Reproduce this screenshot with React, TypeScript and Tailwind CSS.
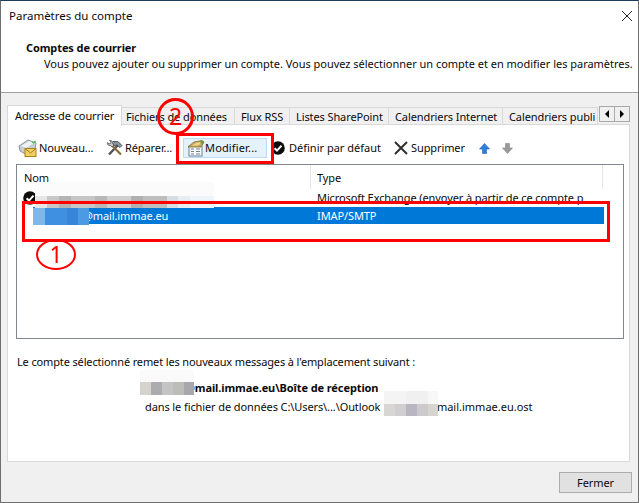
import React from "react";

const Badge = () => (
  <svg width="16" height="16" viewBox="0 0 16 16" className="shrink-0">
    <circle cx="8" cy="8" r="6.8" fill="#0c0c0c" />
    <path d="M4.600 8.200 7 10.600 11.500 5.600" fill="none" stroke="#fff" strokeWidth="2" />
  </svg>
);

const NewIcon = () => (
  <svg width="20" height="20" viewBox="0 0 20 20" className="shrink-0">
    <path d="M1 8 10 2l8 3-1 6-8 6-7-4z" fill="#c9ced3" stroke="#8d969e" strokeWidth="1" />
    <path d="M3 8 11 3l5 2-8 5z" fill="#eef1f3" />
    <path d="M14 3.500l1.500 1.500 2-2" fill="none" stroke="#4cc04c" strokeWidth="1.200" />
    <rect x="7" y="10.500" width="11" height="8" fill="#f2d060" stroke="#a8821e" />
    <path d="M7 10.500l5.500 4.500 5.500-4.500" fill="none" stroke="#a8821e" />
  </svg>
);

const RepairIcon = () => (
  <svg width="18" height="18" viewBox="0 0 18 18" className="shrink-0">
    <path d="M3 15.500 12 6" stroke="#4b5157" strokeWidth="2.400" />
    <path d="M7 2.500h5l4 4-2 2-3-2.500-3 .5-1-2 1-1z" fill="#8a929a" stroke="#3d4349" strokeWidth=".8" />
    <path d="M15 15.500 6.500 7" stroke="#8c6a3a" strokeWidth="2.200" />
    <path d="M1.500 3.500 3 5l1.500-.5.500-1.500L3.500 1.500C5.500 1 7 2.500 6.500 4.500L8 6 6 8 4.500 6.500C2.500 7 1 5.500 1.500 3.500z" fill="#c2c8ce" stroke="#4b5157" strokeWidth=".8" />
  </svg>
);

const EditIcon = () => (
  <svg width="18" height="18" viewBox="0 0 18 18" className="shrink-0">
    <rect x="2" y="7" width="13" height="10" fill="#f7f9fb" stroke="#6f8296" />
    <path d="M4 10h3M4 12.500h3M4 15h3M9 10h4M9 12.500h4M9 15h4" stroke="#6f8296" />
    <path d="M1 8 7 3l8-1.500 2 1.500-3 5H4z" fill="#c9ab5e" stroke="#7d6a34" strokeWidth=".8" />
    <path d="M5 7l4-3 5-1-2 3z" fill="#ecd88f" />
    <path d="M13 1.500l4 1.500-2 3z" fill="#6e9a3c" />
  </svg>
);

const XIcon = () => (
  <svg width="16" height="16" viewBox="0 0 16 16" className="shrink-0">
    <path d="M2 2 14 14M14 2 2 14" stroke="#303030" strokeWidth="2" />
  </svg>
);

const Arrow = ({ up, color, edge }: { up: boolean; color: string; edge: string }) => (
  <svg width="11" height="11" viewBox="0 0 11 11" className="shrink-0">
    <path
      d={up ? "M5.500 .5 10.500 6H7.500v4.500h-4V6H.5z" : "M5.500 10.500 10.500 5H7.500V.5h-4V5H.5z"}
      fill={color}
      stroke={edge}
      strokeWidth=".6"
    />
  </svg>
);

const Tab = ({ label, w, pl = "pl-[4px]" }: { label: string; w: string; pl?: string }) => (
  <div className={`${w} ${pl} h-[18px] leading-[17px] bg-[#f0f0f0] border border-[#d9d9d9] border-l-0 overflow-hidden whitespace-nowrap`}>
    {label}
  </div>
);

const Tool = ({ icon, label, cls }: { icon: React.ReactNode; label: string; cls: string }) => (
  <div className={`flex items-center ${cls}`}>
    {icon}
    <span>{label}</span>
  </div>
);

const Pix = ({ box, cells }: { box: string; cells: [string, string][] }) => (
  <div className={`absolute flex ${box}`}>
    {cells.map(([w, c], i) => (
      <div key={i} className={`${w} ${c} h-full`} />
    ))}
  </div>
);

export default function App() {
  return (
    <div
      className="relative w-[639px] h-[503px] overflow-hidden bg-[#f0f0f0] text-[11px] leading-[16px] text-[#0a0a0a] border-x border-b border-[#6f6f6f] border-t border-t-[#1c3d5a] tracking-[-0.1px]"
      style={{ fontFamily: '"Noto Sans", "Open Sans", Arial, sans-serif' }}
    >
      {/* header */}
      <div className="h-[92px] bg-white border-b border-[#a0a0a0] pl-[8px] relative">
        <div className="pt-[6px] text-[11.5px] leading-[18px] tracking-normal">Paramètres du compte</div>
        <div className="pt-[15px] pl-[17px] font-bold leading-[16px]">Comptes de courrier</div>
        <div className="pl-[35px] whitespace-nowrap tracking-[-0.02px]">
          Vous pouvez ajouter ou supprimer un compte. Vous pouvez sélectionner un compte et en modifier les paramètres.
        </div>
        <svg width="12" height="12" viewBox="0 0 12 12" className="absolute right-[5px] top-[9px]">
          <path d="M1 1 11 11M11 1 1 11" stroke="#222" strokeWidth="1" />
        </svg>
      </div>

      {/* tabs */}
      <div className="pl-[6px] pt-[12px] h-[32px] flex items-start relative">
        <div className="w-[115px] h-[21px] bg-white border border-[#d9d9d9] border-b-0 pl-[7px] leading-[19px] z-10 whitespace-nowrap">
          Adresse de courrier
        </div>
        <div className="flex pt-[2px]">
          <Tab label="Fichiers de données" w="w-[113px]" />
          <Tab label="Flux RSS" w="w-[55px]" pl="pl-[6px]" />
          <Tab label="Listes SharePoint" w="w-[99px]" pl="pl-[6px]" />
          <Tab label="Calendriers Internet" w="w-[114px]" pl="pl-[6px]" />
          <Tab label="Calendriers publi" w="w-[95px]" pl="pl-[6px]" />
        </div>
        <div className="flex h-[16px] mt-[1px] border border-[#a8a8a8] bg-[#f0f0f0] absolute left-[598px] top-[12px] w-[31px]">
          <div className="flex-1 border-r border-[#a8a8a8] flex items-center justify-center">
            <div className="w-0 h-0 border-y-[4px] border-y-transparent border-r-[4px] border-r-black" />
          </div>
          <div className="flex-1 flex items-center justify-center">
            <div className="w-0 h-0 border-y-[4px] border-y-transparent border-l-[4px] border-l-black" />
          </div>
        </div>
      </div>

      {/* panel */}
      <div className="ml-[6px] w-[623px] h-[338px] -mt-[1px] bg-white border border-[#d9d9d9] relative">
        <div className="h-[39px] flex items-start pt-[13px] pl-[10px] whitespace-nowrap">
          <Tool icon={<NewIcon />} label="Nouveau..." cls="w-[88px] gap-[1px] h-[20px]" />
          <Tool icon={<RepairIcon />} label="Réparer..." cls="w-[77px] gap-[1px] h-[20px]" />
          <Tool
            icon={<EditIcon />}
            label="Modifier..."
            cls="w-[84px] h-[20px] pl-[3px] bg-[#e5f1fb] border border-[#bcdcf4] tracking-[0.15px]"
          />
          <Tool icon={<Badge />} label="Définir par défaut" cls="w-[126px] gap-[3px] h-[20px] pl-[3px] tracking-normal" />
          <Tool icon={<XIcon />} label="Supprimer" cls="w-[86px] gap-[2px] h-[20px]" />
          <div className="h-[20px] w-[23px] flex items-center">
            <Arrow up color="#2f7fe0" edge="#1c5cb0" />
          </div>
          <div className="h-[20px] flex items-center">
            <Arrow up={false} color="#9a9a9a" edge="#888" />
          </div>
        </div>

        {/* list */}
        <div className="ml-[8px] w-[608px] h-[175px] border border-[#828790] bg-white">
          <div className="flex h-[24px]">
            <div className="w-[294px] h-full pl-[7px] pt-[3px] border-r border-[#e5e5e5] leading-[20px]">Nom</div>
            <div className="w-[292px] h-full pl-[6px] pt-[3px] border-r border-[#e5e5e5] leading-[20px]">Type</div>
          </div>
          <div className="h-[18px] flex overflow-hidden whitespace-nowrap relative">
            <div className="w-[295px] pl-[5px] pt-[1px]"><Badge /></div>
            <div className="pl-[5px] pt-[1px]">Microsoft Exchange (envoyer à partir de ce compte p</div>
          </div>
          <div className="h-[17px] ml-[16px] w-[571px] bg-[#0078d7] text-white flex leading-[17px] whitespace-nowrap">
            <div className="w-[279px] pl-[50px]">@mail.immae.eu</div>
            <div className="pl-[5px]">IMAP/SMTP</div>
          </div>
        </div>

        {/* footer text */}
        <div className="pl-[9px] pt-[15px] whitespace-nowrap tracking-[-0.14px]">
          Le compte sélectionné remet les nouveaux messages à l'emplacement suivant :
        </div>
        <div className="pl-[177px] pt-[10px] font-bold whitespace-nowrap">@mail.immae.eu\Boîte de réception</div>
        <div className="pl-[137px] pt-[3px] whitespace-nowrap flex">
          <span className="w-[238px]">dans le fichier de données C:\Users\...\Outlook</span>
          <span className="pl-[44px] tracking-normal">@mail.immae.eu.ost</span>
        </div>
      </div>

      {/* button bar */}
      <div className="flex justify-end pr-[6px] pt-[10px]">
        <div className="w-[73px] h-[21px] bg-[#e1e1e1] border border-[#adadad] flex items-center justify-center">Fermer</div>
      </div>

      {/* blurred address fragments */}
      <Pix box="left-[34px] top-[181px] w-[179px] h-[14px]" cells={[["w-full", "bg-[#fbfbfb]"]]} />
      <Pix
        box="left-[34px] top-[195px] w-[179px] h-[12px]"
        cells={[
          ["w-[12px]", "bg-[#e6e6e6]"],
          ["w-[12px]", "bg-[#c8c8c8]"],
          ["w-[12px]", "bg-[#b4b4b4]"],
          ["w-[24px]", "bg-[#c6c6c6]"],
          ["w-[12px]", "bg-[#b8b8b8]"],
          ["w-[24px]", "bg-[#cfcfcf]"],
          ["w-[12px]", "bg-[#b0b0b0]"],
          ["w-[24px]", "bg-[#bebebe]"],
          ["w-[11px]", "bg-[#d8dde2]"],
          ["w-[12px]", "bg-[#e8edf2]"],
          ["w-[24px]", "bg-[#eef5fb]"],
        ]}
      />
      <Pix
        box="left-[32px] top-[207px] w-[56px] h-[17px]"
        cells={[
          ["w-[12px]", "bg-[#7fb7e8]"],
          ["w-[22px]", "bg-[#3f90e0]"],
          ["w-[11px]", "bg-[#3585d8]"],
          ["w-[11px]", "bg-[#4a9ae4]"],
        ]}
      />
      <Pix box="left-[139px] top-[369px] w-[54px] h-[12px]" cells={[["w-full", "bg-[#fafafa]"]]} />
      <Pix
        box="left-[139px] top-[381px] w-[54px] h-[13px]"
        cells={[
          ["w-[11px]", "bg-[#d6d2cc]"],
          ["w-[11px]", "bg-[#acacb0]"],
          ["w-[11px]", "bg-[#c4c4c4]"],
          ["w-[11px]", "bg-[#bcbcb8]"],
          ["w-[10px]", "bg-[#a8a8ac]"],
        ]}
      />
      <Pix
        box="left-[383px] top-[390px] w-[54px] h-[13px]"
        cells={[
          ["w-[22px]", "bg-[#f4f4f4]"],
          ["w-[22px]", "bg-[#f0f0f0]"],
          ["w-[10px]", "bg-[#f7f7f7]"],
        ]}
      />
      <Pix
        box="left-[383px] top-[403px] w-[54px] h-[12px]"
        cells={[
          ["w-[11px]", "bg-[#d8d6d4]"],
          ["w-[11px]", "bg-[#d0ced0]"],
          ["w-[11px]", "bg-[#b8b6c0]"],
          ["w-[11px]", "bg-[#cccacc]"],
          ["w-[10px]", "bg-[#d8d4d0]"],
        ]}
      />

      {/* red annotations */}
      <div className="absolute left-[21px] top-[200px] w-[588px] h-[41px] border-[3px] border-[#ff0000]" />
      <div className="absolute left-[175px] top-[132px] w-[98px] h-[31px] border-[3px] border-[#ff0000]" />
      <div className="absolute left-[156px] top-[97px] w-[37px] h-[37px] rounded-full border-[3px] border-[#ff0000] flex items-center justify-center text-[#ff0000] text-[23px] leading-none tracking-normal">
        2
      </div>
      <div className="absolute left-[35px] top-[238px] w-[40px] h-[31px] rounded-[50%] border-[2px] border-[#ff0000] flex items-center justify-center text-[#ff0000] text-[23px] leading-none tracking-normal">
        1
      </div>
    </div>
  );
}
